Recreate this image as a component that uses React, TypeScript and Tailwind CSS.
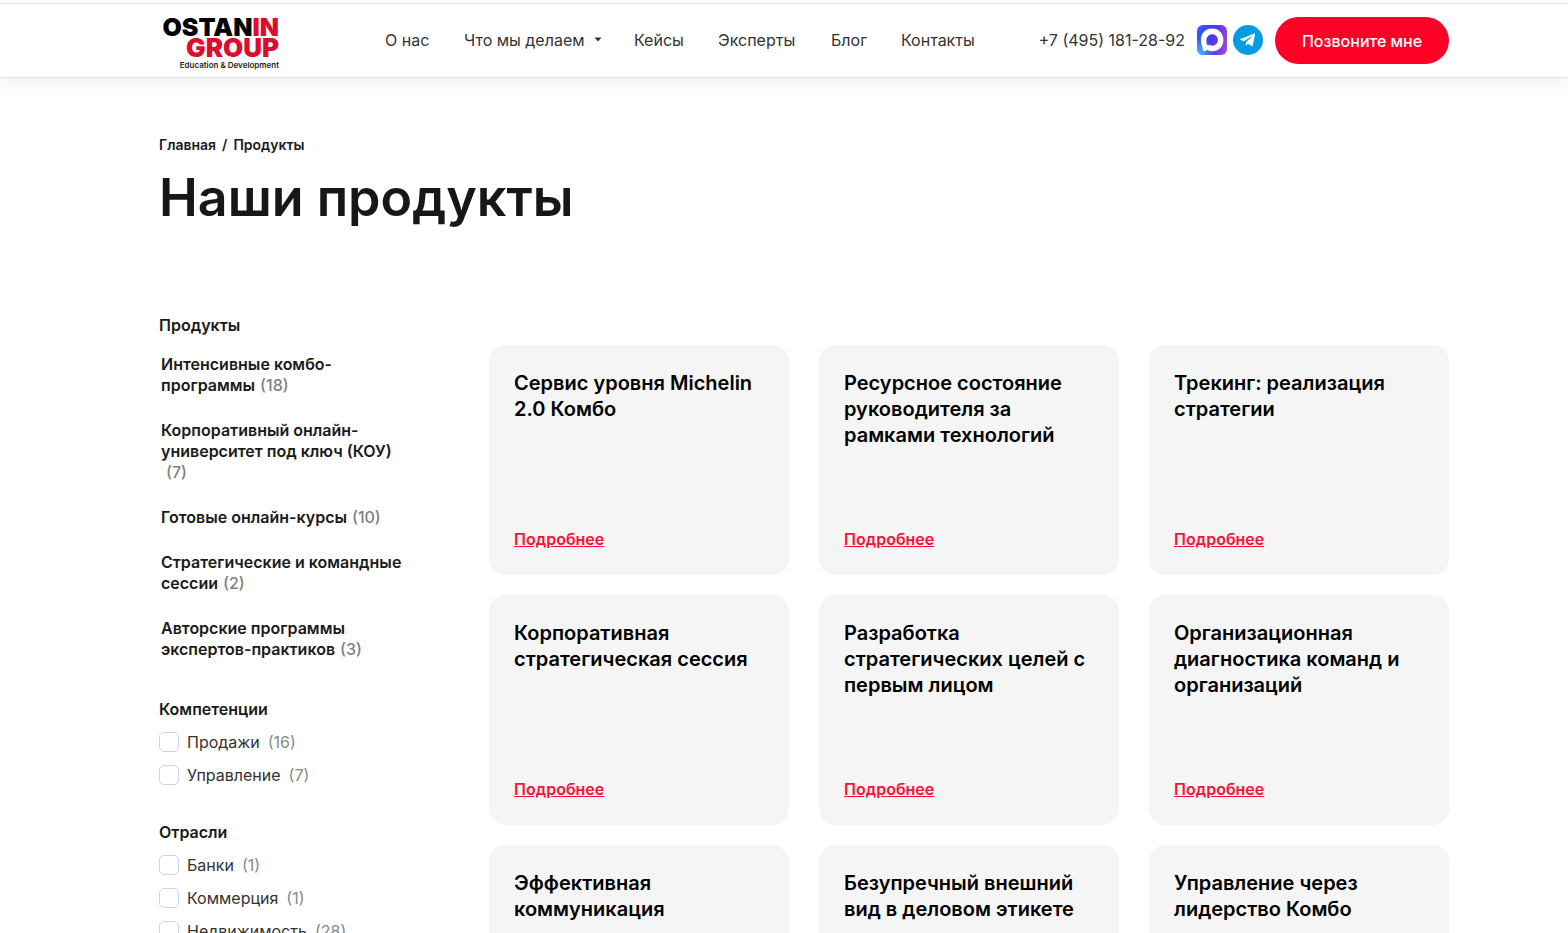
import { useState } from 'react';

const navItems = [
  { name: 'О нас', width: 'w-[47px]' },
  { name: 'Что мы делаем', width: 'w-[138px]', dropdown: true },
  { name: 'Кейсы', width: 'w-[52px]' },
  { name: 'Эксперты', width: 'w-[81px]' },
  { name: 'Блог', width: 'w-[38px]' },
  { name: 'Контакты', width: 'w-[79px]' },
];

const categories = [
  { name: 'Интенсивные комбо-\nпрограммы', count: 18 },
  { name: 'Корпоративный онлайн-\nуниверситет под ключ (КОУ)\n', count: 7 },
  { name: 'Готовые онлайн-курсы', count: 10 },
  { name: 'Стратегические и командные\nсессии', count: 2 },
  { name: 'Авторские программы\nэкспертов-практиков', count: 3 },
];

const filters = [
  {
    title: 'Компетенции',
    options: [
      { name: 'Продажи', count: 16 },
      { name: 'Управление', count: 7 },
    ],
  },
  {
    title: 'Отрасли',
    options: [
      { name: 'Банки', count: 1 },
      { name: 'Коммерция', count: 1 },
      { name: 'Недвижимость', count: 28 },
    ],
  },
];

const products = [
  'Сервис уровня Michelin\n2.0 Комбо',
  'Ресурсное состояние\nруководителя за\nрамками технологий',
  'Трекинг: реализация\nстратегии',
  'Корпоративная\nстратегическая сессия',
  'Разработка\nстратегических целей с\nпервым лицом',
  'Организационная\nдиагностика команд и\nорганизаций',
  'Эффективная\nкоммуникация',
  'Безупречный внешний\nвид в деловом этикете',
  'Управление через\nлидерство Комбо',
];

const Logo = () => (
  <a href="#" aria-label="Ostanin Group" className="flex w-[120px] flex-col items-end pt-1.5 whitespace-nowrap">
    <span className="text-[25px] leading-[20px] font-black text-black">
      OSTAN<span className="text-[#dc0d2d]">IN</span>
    </span>
    <span className="text-[26px] leading-[22px] font-black text-[#dc0d2d]">GROUP</span>
    <span className="text-[8px] leading-[12px] font-semibold text-[#222]">Education &amp; Development</span>
  </a>
);

const MaxIcon = () => (
  <svg viewBox="0 0 30 30" className="size-[30px]" aria-hidden="true">
    <defs>
      <linearGradient id="max-base" x1="0" y1="0.4" x2="1" y2="0.6">
        <stop offset="0" stopColor="#2b5bff" />
        <stop offset="0.5" stopColor="#4a38e8" />
        <stop offset="1" stopColor="#9a45dc" />
      </linearGradient>
      <radialGradient id="max-glow" cx="0" cy="1" r="0.6">
        <stop offset="0" stopColor="#45c8ff" />
        <stop offset="1" stopColor="#45c8ff" stopOpacity="0" />
      </radialGradient>
    </defs>
    <rect width="30" height="30" rx="6" fill="url(#max-base)" />
    <rect width="30" height="30" rx="6" fill="url(#max-glow)" />
    <path
      fill="#fff"
      fillRule="evenodd"
      d="M15.3 3.6C21.8 3.6 26.4 8.5 26.4 15S21.6 26.3 15.4 26.3C13.3 26.3 12.2 25.9 10.5 24.7C9.3 26 6.5 26.9 5.9 25.2C5.7 22.2 3.9 19.2 3.9 15.1C3.9 8.3 8.8 3.6 15.3 3.6ZM15.3 9.2C12.1 9.2 9.7 11.6 9.4 14.8C9.2 17.2 9.9 20.3 10.9 20.5C11.4 20.6 12.2 19.8 12.5 19.4C13.3 20.2 14.3 20.7 15.3 20.7C18.4 20.7 20.9 18.2 20.9 15S18.5 9.2 15.3 9.2Z"
    />
  </svg>
);

const TelegramIcon = () => (
  <svg viewBox="0 0 30 30" className="size-[30px]" aria-hidden="true">
    <circle cx="15" cy="15" r="15" fill="#059be5" />
    <path
      fill="#fff"
      d="M21.4 8.5L7.6 14.1C7 14.4 7 14.9 7.6 15.1L11 16.2L18.6 11.3C19 11.1 19.3 11.3 19 11.6L12.9 17.2L12.7 20.6C13 20.6 13.2 20.5 13.4 20.3L15.1 18.7L18.4 21.1C19.1 21.5 19.5 21.3 19.7 20.5L22.1 9.5C22.3 8.6 21.9 8.3 21.4 8.5Z"
    />
  </svg>
);

const Header = () => (
  <header className="mt-[3px] border-y border-[#e3e3e3] bg-white shadow-[0_4px_18px_4px_rgba(0,0,0,0.05)]">
    <div className="mx-auto flex h-[73px] max-w-[1330px] items-center pl-10">
      <Logo />
      <nav className="ml-[106px] flex items-center gap-8 pb-0.5 text-base leading-5 whitespace-nowrap text-[#333]">
        {navItems.map((item) => (
          <a key={item.name} href="#" className={`${item.width} flex items-center justify-between`}>
            {item.name}
            {item.dropdown && (
              <svg viewBox="0 0 8 5" className="h-[5px] w-[8px]" aria-hidden="true">
                <path d="M0.5 0.5H7.5L4 4.5Z" fill="#333" />
              </svg>
            )}
          </a>
        ))}
      </nav>
      <div className="ml-auto flex items-center">
        <div className="flex items-center pb-0.5">
          <a href="tel:+74951812892" className="mr-3 text-base leading-5 whitespace-nowrap text-[#333]">
            +7 (495) 181-28-92
          </a>
          <a href="#" aria-label="MAX" className="mr-1.5">
            <MaxIcon />
          </a>
          <a href="#" aria-label="Telegram" className="mr-3">
            <TelegramIcon />
          </a>
        </div>
        <button type="button" className="h-[47px] w-[174px] rounded-full bg-[#ff0026] text-base font-medium text-white">
          Позвоните мне
        </button>
      </div>
    </div>
  </header>
);

const FilterGroup = ({ title, options }: (typeof filters)[number]) => {
  const [selected, setSelected] = useState<string[]>([]);

  const toggle = (name: string) =>
    setSelected((prev) => (prev.includes(name) ? prev.filter((n) => n !== name) : [...prev, name]));

  return (
    <fieldset>
      <legend className="mb-[13px] text-base leading-5 font-semibold text-[#1a1a1a]">{title}</legend>
      <div className="space-y-[13px]">
        {options.map((option) => (
          <label key={option.name} className="flex h-5 items-center text-base leading-5 text-[#333]">
            <input
              type="checkbox"
              checked={selected.includes(option.name)}
              onChange={() => toggle(option.name)}
              className="mr-2 size-5 appearance-none rounded-[5px] border border-[#ccd3e3] bg-white checked:bg-[#ff0026]"
            />
            {option.name}
            <span className="ml-2 text-[#888]">{`(${option.count})`}</span>
          </label>
        ))}
      </div>
    </fieldset>
  );
};

const Sidebar = () => (
  <aside className="w-[330px] shrink-0">
    <h2 className="mb-[18px] text-base leading-[21px] font-semibold text-[#1a1a1a]">Продукты</h2>
    <ul className="space-y-6 pl-0.5">
      {categories.map((category) => (
        <li key={category.name} className="text-base leading-[21px] font-semibold whitespace-pre-line text-[#1a1a1a]">
          <a href="#">
            {category.name}
            <span className="ml-[5px] font-medium text-[#808080]">{`(${category.count})`}</span>
          </a>
        </li>
      ))}
    </ul>
    <div className="mt-[39px] space-y-[37px]">
      {filters.map((group) => (
        <FilterGroup key={group.title} {...group} />
      ))}
    </div>
  </aside>
);

const ProductCard = ({ title }: { title: string }) => (
  <article className="flex h-[230px] flex-col items-start justify-between rounded-2xl bg-[#f5f5f5] px-[25px] pt-[25px] pb-[26px]">
    <h3 className="text-xl leading-[26px] font-semibold whitespace-pre-line text-black">{title}</h3>
    <a href="#" className="text-base leading-5 font-semibold text-[#ff0f37] underline">
      Подробнее
    </a>
  </article>
);

const App = () => (
  <div className="min-h-screen bg-white font-[Inter,sans-serif]">
    <Header />
    <main className="mx-auto max-w-[1330px] pt-[57px] pl-10">
      <nav className="flex gap-1.5 text-sm leading-5 font-semibold text-[#1a1a1a]">
        <a href="#">Главная</a>
        <span>/</span>
        <a href="#">Продукты</a>
      </nav>
      <h1 className="mt-3 text-[52px] leading-[62px] font-semibold text-[#171717]">Наши продукты</h1>
      <div className="mt-[86px] flex items-start">
        <Sidebar />
        <section className="mt-[30px] grid flex-1 grid-cols-3 gap-x-[30px] gap-y-5">
          {products.map((title) => (
            <ProductCard key={title} title={title} />
          ))}
        </section>
      </div>
    </main>
  </div>
);

export default App;
